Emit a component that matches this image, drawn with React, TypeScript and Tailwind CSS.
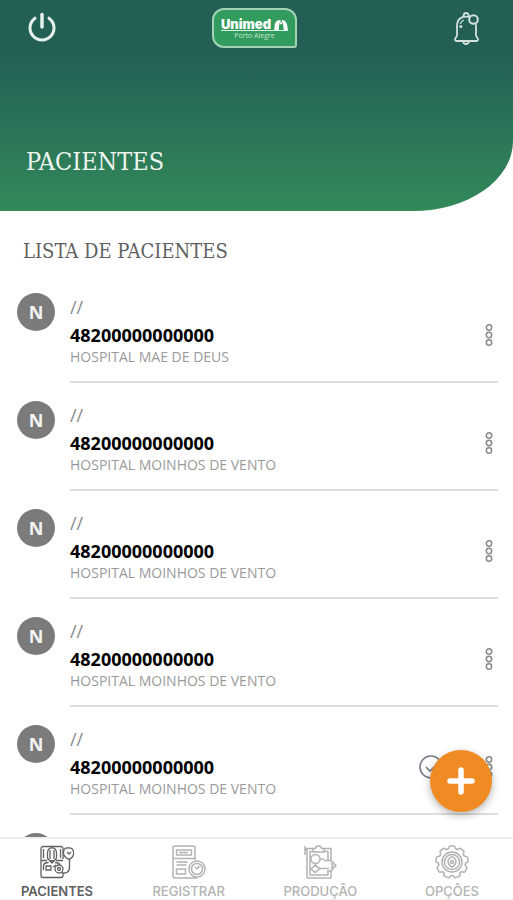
import type { ReactNode } from "react";

type Patient = { card: string; hospital: string; done?: boolean };

const patients: Patient[] = [
  { card: "48200000000000", hospital: "HOSPITAL MAE DE DEUS" },
  { card: "48200000000000", hospital: "HOSPITAL MOINHOS DE VENTO" },
  { card: "48200000000000", hospital: "HOSPITAL MOINHOS DE VENTO" },
  { card: "48200000000000", hospital: "HOSPITAL MOINHOS DE VENTO" },
  { card: "48200000000000", hospital: "HOSPITAL MOINHOS DE VENTO", done: true },
];

function Avatar({ letter }: { letter?: string }) {
  return (
    <span className="flex size-[38px] shrink-0 items-center justify-center rounded-full bg-[#7b7b7b] font-['Open_Sans',sans-serif] text-lg font-bold text-[#f4f4f4]">
      {letter}
    </span>
  );
}

function PowerIcon() {
  return (
    <svg width="30" height="30" viewBox="0 0 30 30" fill="none" stroke="#e6f2ee" strokeWidth="3" strokeLinecap="round" aria-hidden="true">
      <path d="M15 2.500V15" strokeWidth="3.500" />
      <path d="M8 6.200a12 12 0 1 0 14 0" />
    </svg>
  );
}

function BellIcon() {
  return (
    <svg width="30" height="36" viewBox="0 0 30 36" fill="none" stroke="#d3e2de" strokeWidth="1.800" strokeLinecap="round" strokeLinejoin="round" aria-hidden="true">
      <path d="M17 6C9 4 5 9 5 15v9c0 2-2 3-2 4.500 0 1 .5 1.500 1.500 1.500h20c1 0 1.500-.5 1.500-1.500 0-1.500-2-2.500-2-4.500V14" />
      <path d="M11.500 5c.3-2 1.300-3 2.500-3s2.500 1 3 3M11 30.500c.5 1.800 1.500 2.500 3 2.500s2.500-.7 3-2.500" />
      <path d="M8.500 12.500c.5-1.700 1.500-2.700 3-3.300" strokeWidth="1.200" />
      <circle cx="21.500" cy="8.500" r="4.300" strokeWidth="2" />
      <circle cx="8.800" cy="15.500" r=".7" />
    </svg>
  );
}

function UnimedLogo() {
  return (
    <div className="flex h-10 w-[85px] flex-col items-center rounded-xl rounded-br-[3px] border-2 border-[#a3d2b5] bg-[#329b5e] pt-2 text-white">
      <div className="flex items-end gap-[3px] border-b border-[#d9efe1]">
        <span className="font-[Inter,sans-serif] text-[13px] leading-3 font-black">Unimed</span>
        <svg width="14" height="10" viewBox="0 0 15 11" fill="#fff" aria-hidden="true">
          <path d="M7 0C2.500 0 .5 3 .5 6.500L0 11h5L5.500 6C5.700 4 6 3 7 2Z" />
          <path d="M8.500 0c3.500 0 5.500 3 6 6.500L15 11h-4.500L10 6C9.700 4 9.500 3 8.500 2Z" />
          <circle cx="7.700" cy="3.500" r="1.300" />
        </svg>
      </div>
      <span className="font-['Open_Sans',sans-serif] text-[7px] leading-[9px] text-[#c3e5d0]">Porto Alegre</span>
    </div>
  );
}

function PatientsIcon() {
  return (
    <svg width="34" height="34" viewBox="0 0 34 34" fill="none" stroke="currentColor" strokeWidth="1.300" strokeLinejoin="round" aria-hidden="true">
      <path d="M23 14V3.500A2 2 0 0 0 21 1.500H3a2 2 0 0 0-2 2v27a2 2 0 0 0 2 2h18a2 2 0 0 0 2-2V28" />
      <path d="M1 15.500h6M16 15.500h7M3.500 4v9M20.500 4v9" />
      <path d="M7.500 8c0-7 9-7 9 0v4c0 5-9 5-9 0ZM10 5v9M14 5v9M9.500 15.500l2.500 2.500 2.500-2.500" />
      <path d="M3.500 25v-4c0-2.500 2.500-3.500 5-3.500M15 17.500c2.500 0 4 .5 5 2.500M6 21h5v4H6zM13 22l3-2" />
      <circle cx="19" cy="24" r="4" />
      <circle cx="19" cy="24" r="1.500" />
      <path d="M21 27.500c5 1.500 8.500-.5 8.500-5V14M28 14c-7-4-5-12 0-11 6-1 8 7 2 11Z" />
      <path d="M27 7l2 2 2-2" />
    </svg>
  );
}

function RegisterIcon() {
  return (
    <svg width="34" height="34" viewBox="0 0 34 34" fill="none" stroke="currentColor" strokeWidth="1.500" strokeLinejoin="round" aria-hidden="true">
      <path d="M23 15V3a2 2 0 0 0-2-2H3a2 2 0 0 0-2 2v28a2 2 0 0 0 2 2h22M1 13.500h22" />
      <path d="M4.500 5h15v5h-15zM7 7.500h9M4.500 17h11M4.500 20h10M4.500 24h9v5h-9z" />
      <circle cx="25" cy="24" r="8" />
      <circle cx="25" cy="24" r="5.500" />
      <path d="m25 24 2.500-3M23 22l2 2" />
    </svg>
  );
}

function ProductionIcon() {
  return (
    <svg width="34" height="34" viewBox="0 0 34 34" fill="none" stroke="currentColor" strokeWidth="1.500" strokeLinejoin="round" aria-hidden="true">
      <path d="M10 3.500H4V33h24v-7M21 3.500h7V15M10 6.500H7V30h18v-4M21 6.500h4V15M2 1v9M2 4h3" />
      <path d="M10 7V3.500h2.500c0-3.500 6-3.500 6 0H21V7Z" />
      <circle cx="12.500" cy="14" r="4.500" />
      <path d="M12.500 18.500V21M17 14h4M21 15.500h7l5 5-5 5.500h-4" />
      <path d="m12 20.500 5 3-5 4-4-3.500ZM17 23.500h9M28 18l2 2.500-2 3" />
    </svg>
  );
}

function OptionsIcon() {
  const teeth = Array.from({ length: 9 }, (_, i) => i * 40);
  return (
    <svg width="34" height="34" viewBox="0 0 34 34" fill="none" stroke="currentColor" strokeWidth="1.500" strokeLinecap="round" strokeLinejoin="round" aria-hidden="true">
      {teeth.map((angle) => (
        <path key={angle} transform={`rotate(${angle} 17 17)`} d="M12.300 4.300C14 3.800 14 3.300 14 2.200q0-1.200 1.200-1.200h3.600Q20 1 20 2.200c0 1.100 0 1.600 1.700 2.100" />
      ))}
      <circle cx="17" cy="17" r="10" />
      <circle cx="17" cy="17" r="7.500" />
      <path d="M17 11.500c2 1.500 4 2 4 4.500s-2 5-4 6c-2-1-4-3.500-4-6s2-3 4-4.500Z" />
      <circle cx="17" cy="17" r="1.500" />
    </svg>
  );
}

function PatientRow({ patient }: { patient: Patient }) {
  return (
    <li className="flex gap-[15px] pb-[18px]">
      <Avatar letter="N" />
      <div className="flex min-w-0 flex-1 justify-between border-b-2 border-[#dedede]">
        <div className="pt-0.5 pb-3.5">
          <p className="font-['Open_Sans',sans-serif] text-lg leading-6 text-[#8a8a8a]">//</p>
          <p className="mt-1 font-['Open_Sans',sans-serif] text-lg leading-6 font-bold text-black">{patient.card}</p>
          <p className="font-['Open_Sans',sans-serif] text-sm leading-5 text-[#9a9a9a]">{patient.hospital}</p>
        </div>
        <div className="mb-1 flex items-center gap-[37px]">
          {patient.done && (
            <svg width="24" height="24" viewBox="0 0 24 24" fill="none" stroke="#777c86" strokeWidth="1.600" role="img" aria-label="Concluído">
              <circle cx="12" cy="12" r="11" />
              <path d="m7 12 4 4 7-7" />
            </svg>
          )}
          <button type="button" aria-label="Mais ações" className="px-1">
            <svg width="10" height="24" viewBox="0 0 10 24" fill="none" stroke="#888" strokeWidth="1.500" aria-hidden="true">
              <circle cx="5" cy="4.500" r="2.700" />
              <circle cx="5" cy="12" r="2.700" />
              <circle cx="5" cy="19.500" r="2.700" />
            </svg>
          </button>
        </div>
      </div>
    </li>
  );
}

function Tab({ label, icon, active }: { label: string; icon: ReactNode; active?: boolean }) {
  return (
    <a
      href="#"
      aria-current={active ? "page" : undefined}
      className={
        "flex w-[72px] flex-col items-center gap-1 pt-[6px] font-[Inter,sans-serif] text-[13px] leading-4 " +
        (active ? "font-semibold text-[#606060]" : "font-medium text-[#b2b2b2]")
      }
    >
      {icon}
      {label}
    </a>
  );
}

export default function App() {
  return (
    <div className="relative flex h-screen flex-col overflow-hidden bg-white">
      <header className="flex h-[211px] shrink-0 flex-col justify-between rounded-br-[100px_70px] bg-linear-to-b from-[#245f56] from-25% to-[#328a58] pb-[31px]">
        <div className="grid grid-cols-3 items-start pt-2 pr-[31px] pl-[27px]">
          <button type="button" aria-label="Sair" className="mt-1 justify-self-start">
            <PowerIcon />
          </button>
          <div className="justify-self-center">
            <UnimedLogo />
          </div>
          <button type="button" aria-label="Notificações" className="mt-[3px] justify-self-end">
            <BellIcon />
          </button>
        </div>
        <h1 className="px-[26px] font-['DejaVu_Serif_Condensed','DejaVu_Serif',serif] text-[25px] leading-9 text-[#edf6ef]">PACIENTES</h1>
      </header>
      <main className="min-h-0 flex-1 overflow-hidden">
        <h2 className="px-[23px] pt-6 font-['DejaVu_Serif_Condensed','DejaVu_Serif',serif] text-xl leading-8 text-[#606060]">LISTA DE PACIENTES</h2>
        <ul className="pt-[26px] pr-[15px] pl-[17px]">
          {patients.map((patient, i) => (
            <PatientRow key={i} patient={patient} />
          ))}
          <li>
            <Avatar />
          </li>
        </ul>
      </main>
      <button
        type="button"
        aria-label="Adicionar paciente"
        className="absolute right-[21px] bottom-[88px] flex size-[62px] items-center justify-center rounded-full bg-[#ef8b22] shadow-[0_3px_8px_rgba(0,0,0,0.3)]"
      >
        <svg width="28" height="28" viewBox="0 0 28 28" stroke="#fff" strokeWidth="5.500" strokeLinecap="round" aria-hidden="true">
          <path d="M14 3v22M3 14h22" />
        </svg>
      </button>
      <nav className="flex h-[63px] shrink-0 justify-between border-t-2 border-b border-t-[#eeeeee] border-b-[#f4f4f4] bg-white pr-[25px] pl-[21px]">
        <Tab label="PACIENTES" icon={<PatientsIcon />} active />
        <Tab label="REGISTRAR" icon={<RegisterIcon />} />
        <Tab label="PRODUÇÃO" icon={<ProductionIcon />} />
        <Tab label="OPÇÕES" icon={<OptionsIcon />} />
      </nav>
    </div>
  );
}
